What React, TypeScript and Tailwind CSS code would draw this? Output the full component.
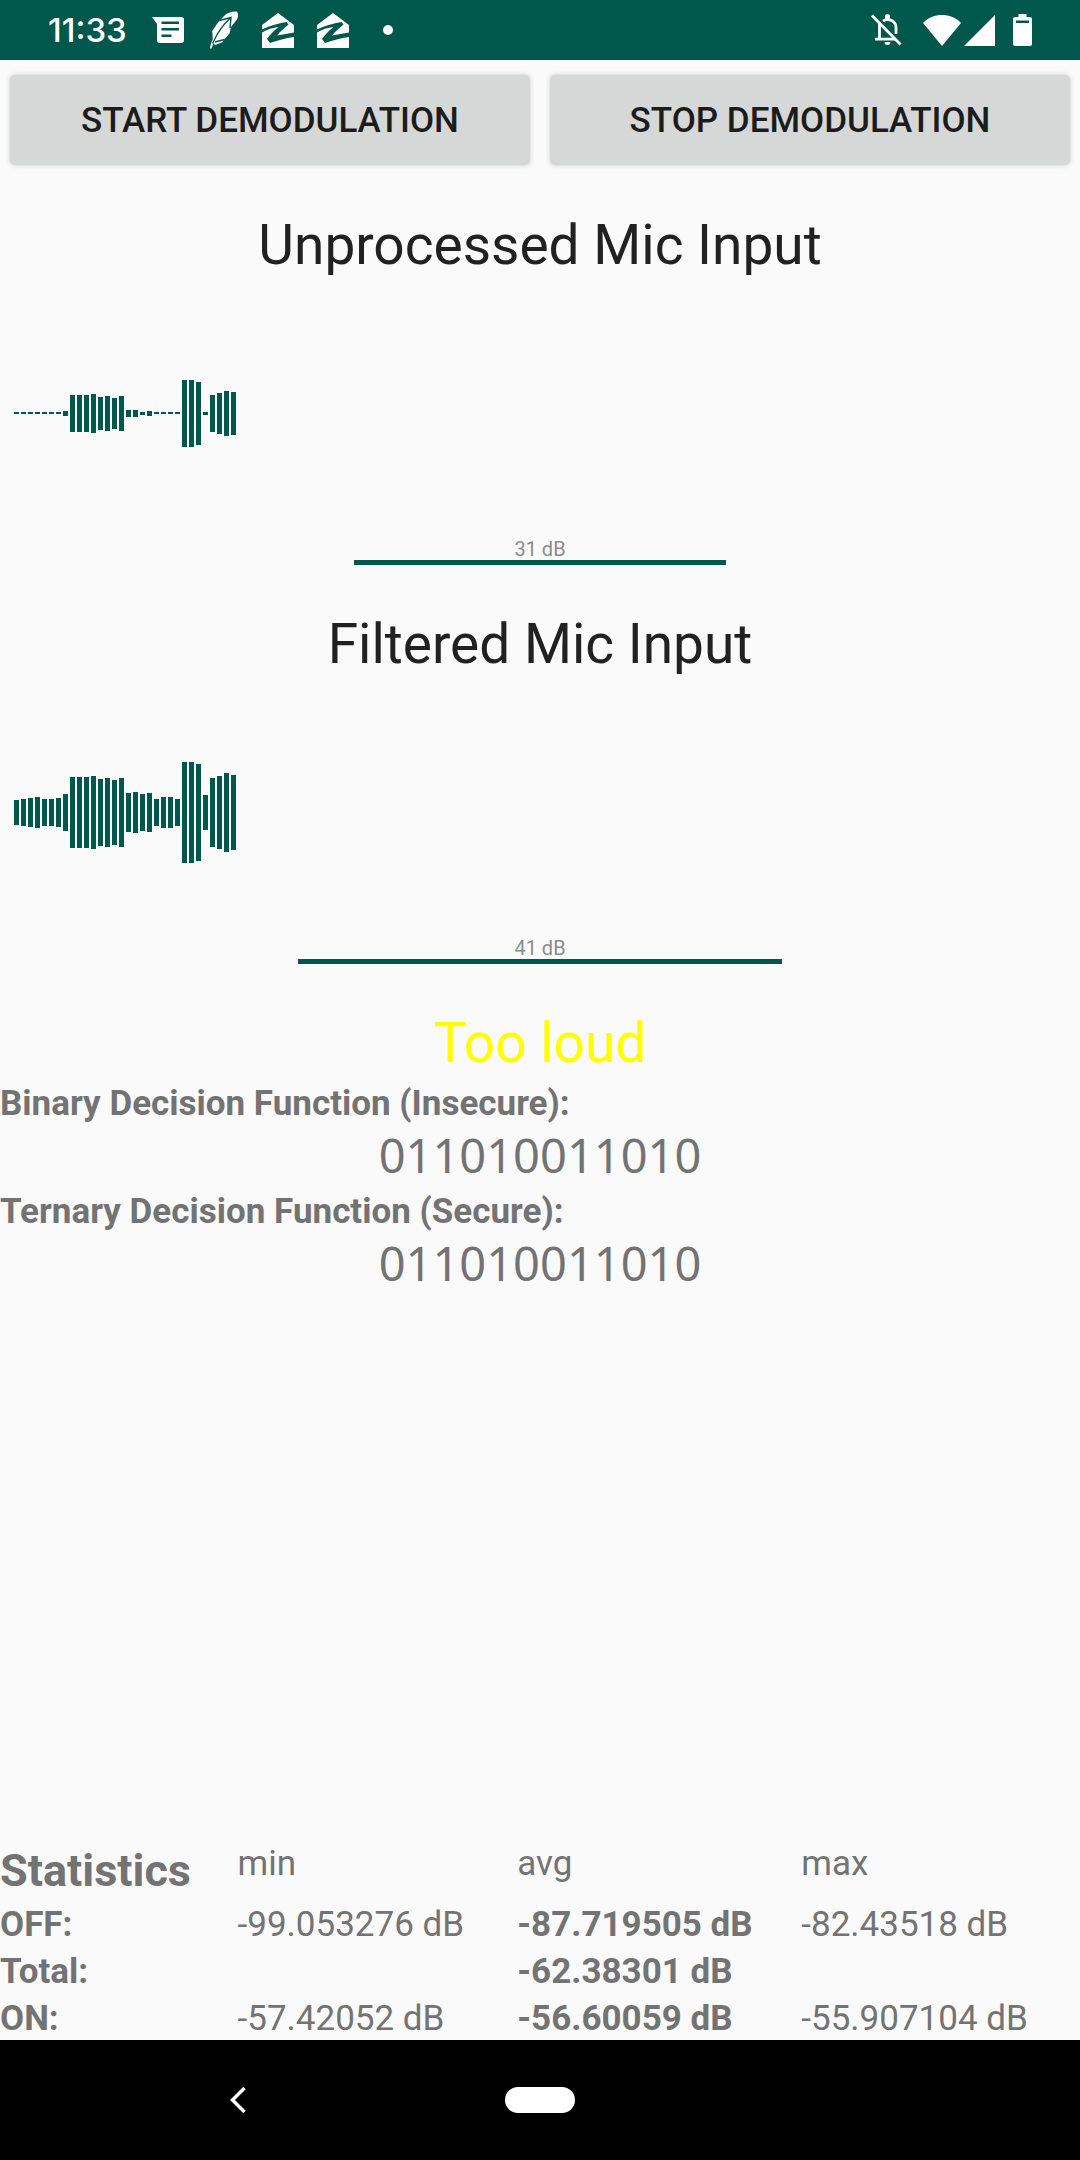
import type { ReactNode } from "react";

const RAW_BARS = [
  2, 2, 2, 2, 2, 2, 2, 5, 37, 37, 37, 39, 33, 35, 31, 35, 7, 7, 3, 5, 2, 2, 2,
  2, 67, 67, 63, 3, 37, 41, 45, 43,
];
const FILTERED_BARS = [
  25, 27, 29, 31, 27, 27, 29, 37, 71, 71, 71, 73, 67, 69, 65, 69, 39, 41, 37,
  39, 27, 31, 31, 27, 101, 101, 97, 35, 69, 73, 79, 75,
];

const STATS = [
  { name: "OFF:", min: "-99.053276 dB", avg: "-87.719505 dB", max: "-82.43518 dB" },
  { name: "Total:", min: "", avg: "-62.38301 dB", max: "" },
  { name: "ON:", min: "-57.42052 dB", avg: "-56.60059 dB", max: "-55.907104 dB" },
];

function Waveform({ bars, label }: { bars: number[]; label: string }) {
  return (
    <svg
      role="img"
      aria-label={label}
      width={bars.length * 7}
      height="101"
      shapeRendering="crispEdges"
      className="block fill-[#00574b]"
    >
      {bars.map((h, i) => (
        <rect key={i} x={i * 7} y={Math.floor((101 - h) / 2)} width="5" height={h} />
      ))}
    </svg>
  );
}

function MicPanel({
  title,
  bars,
  level,
  meter,
}: {
  title: string;
  bars: number[];
  level: string;
  meter: string;
}) {
  return (
    <section className="flex h-[399px] flex-col">
      <h2 className="text-center text-[55px] leading-[73px] text-[#212121]">{title}</h2>
      <div className="mt-[81px] px-[14px]">
        <Waveform bars={bars} label={title + " waveform"} />
      </div>
      <div className="mt-[75px] flex flex-col items-center">
        <span className="text-[20px] leading-[21px] text-[#8c8c8c]">{level}</span>
        <div className="h-[5px] bg-[#00574b]" style={{ width: meter }} />
      </div>
    </section>
  );
}

function DemodButton({ children }: { children: ReactNode }) {
  return (
    <button
      type="button"
      className="h-[90px] flex-1 rounded-[5px] bg-[#d6d7d7] pt-[2px] text-[35px] font-medium text-[#1c1c1c] uppercase shadow-[0_0_5px_rgba(0,0,0,0.2)]"
    >
      {children}
    </button>
  );
}

function DecisionOutput({ title, bits }: { title: string; bits: string }) {
  return (
    <section>
      <h3 className="text-[35px] leading-[47px] font-bold">{title}</h3>
      <p className="pb-1 text-center font-['Noto_Sans',sans-serif] text-[47px] leading-[57px]">
        {bits}
      </p>
    </section>
  );
}

function MessageIcon() {
  return (
    <svg width="32" height="26" viewBox="0 0 32 26" aria-hidden="true">
      <path
        fill="#fff"
        fillRule="evenodd"
        d="M0 0h29a3 3 0 0 1 3 3v20a3 3 0 0 1-3 3H8a3 3 0 0 1-3-3V7zM9.500 4.500v2.500h17.500V4.500zM9.500 11v2.500h17.500V11zM9.500 17.500v2.500h10v-2.500z"
      />
    </svg>
  );
}

function FeatherIcon() {
  return (
    <svg width="29" height="38" viewBox="0 0 29 38" aria-hidden="true">
      <path
        fill="#fff"
        d="M0 37.500C.5 34 1.500 31 2.800 28L2.200 20 8 11.500 14 5C17 2 22 .2 27 .7 28.600 3 28.200 6 27 8.500L21 16 19.500 22.500 14.500 28 12 31.500 5 34 3.500 32 1.500 37.500z"
      />
      <path
        fill="none"
        stroke="#00574b"
        strokeWidth="1.400"
        d="M2.500 32.500C7 22.500 13 13.500 20.500 7M9.500 9.500 21 6.500 20 17M5 31l9.500-2.500"
      />
    </svg>
  );
}

function HouseIcon() {
  return (
    <svg width="32" height="35" viewBox="0 0 32 35" aria-hidden="true">
      <path
        fill="#fff"
        d="M16 0 32 12v7.500L15 22.500C18 18.500 23 14.500 26.500 11.500L24.500 9C16 10.500 7 13 0 16.500V12z"
      />
      <path
        fill="#fff"
        d="M0 19.500C5 16.500 11 14.500 16.500 14 12 17.500 8 21.500 5 26l3 4C15 27.500 24 25 32 24V35H0z"
      />
    </svg>
  );
}

function BellOffIcon() {
  return (
    <svg width="31" height="32" viewBox="0 0 31 32" fill="none" stroke="#fff" aria-hidden="true">
      <path strokeWidth="2.800" d="M1 1.500 29.500 30.500" />
      <path strokeWidth="2.800" d="M8.500 10v15.500M4 25.200h20M12 7C18 3.500 25 7 25 14v6" />
      <path fill="#fff" stroke="none" d="M14 5V2.500a2.500 2.500 0 0 1 5 0V5zM13.500 28h6a3 3 0 0 1-6 0z" />
    </svg>
  );
}

function StatusBar() {
  return (
    <header className="flex h-[60px] items-center bg-[#00574b] px-[48px] text-white">
      <time className="mr-[29px] w-[75px] font-['Inter',sans-serif] text-[33px] leading-[60px] font-medium whitespace-nowrap">
        11:33
      </time>
      <MessageIcon />
      <span className="ml-[26px]">
        <FeatherIcon />
      </span>
      <span className="ml-[23px]">
        <HouseIcon />
      </span>
      <span className="ml-[23px]">
        <HouseIcon />
      </span>
      <span className="ml-[34px] size-[10px] rounded-full bg-white" />
      <div className="ml-auto flex items-center">
        <BellOffIcon />
        <svg className="ml-[21px]" width="38" height="31" viewBox="0 0 38 31" aria-hidden="true">
          <path fill="#fff" d="M0 8C10-2.600 28-2.600 38 8L19 31z" />
        </svg>
        <svg className="ml-[3px]" width="31" height="31" viewBox="0 0 31 31" aria-hidden="true">
          <path fill="#fff" d="M31 0v31H0z" />
        </svg>
        <svg className="ml-[18px]" width="19" height="32" viewBox="0 0 19 32" aria-hidden="true">
          <path
            fill="#fff"
            fillRule="evenodd"
            d="M5.500 0h8v3H17a2 2 0 0 1 2 2v25a2 2 0 0 1-2 2H2a2 2 0 0 1-2-2V5a2 2 0 0 1 2-2h3.500zM3 6.500V9h13V6.500z"
          />
        </svg>
      </div>
    </header>
  );
}

export default function App() {
  return (
    <div className="flex min-h-screen flex-col bg-[#fafafa] font-['Roboto',sans-serif]">
      <StatusBar />
      <main className="flex flex-1 flex-col text-[#737373]">
        <div className="flex gap-[20px] px-[10px] pt-[15px] pb-[44px]">
          <DemodButton>Start Demodulation</DemodButton>
          <DemodButton>Stop Demodulation</DemodButton>
        </div>
        <MicPanel title="Unprocessed Mic Input" bars={RAW_BARS} level="31 dB" meter="34.4%" />
        <MicPanel title="Filtered Mic Input" bars={FILTERED_BARS} level="41 dB" meter="44.8%" />
        <p className="text-center text-[55px] leading-[73px] text-[#ffff00]">Too loud</p>
        <DecisionOutput title="Binary Decision Function (Insecure):" bits="011010011010" />
        <DecisionOutput title="Ternary Decision Function (Secure):" bits="011010011010" />
        <table className="mt-auto w-full table-fixed border-collapse text-left text-[35px] leading-[43px]">
          <colgroup>
            <col className="w-[22%]" />
            <col className="w-[25.9%]" />
            <col className="w-[26.3%]" />
            <col />
          </colgroup>
          <thead>
            <tr className="align-top">
              <th className="pt-1 text-[45px] leading-[57px] font-bold">Statistics</th>
              <th className="pt-1 font-normal">min</th>
              <th className="pt-1 font-normal">avg</th>
              <th className="pt-1 font-normal">max</th>
            </tr>
          </thead>
          <tbody>
            {STATS.map((row) => (
              <tr key={row.name}>
                <th className="pt-1 font-bold">{row.name}</th>
                <td className="pt-1">{row.min}</td>
                <td className="pt-1 font-bold">{row.avg}</td>
                <td className="pt-1">{row.max}</td>
              </tr>
            ))}
          </tbody>
        </table>
      </main>
      <nav className="grid h-[120px] grid-cols-[44%_12%_44%] items-center bg-black">
        <button type="button" aria-label="Back" className="justify-self-center">
          <svg width="16" height="26" viewBox="0 0 16 26" aria-hidden="true">
            <path fill="none" stroke="#fff" strokeWidth="3.500" d="M14.500 1 2.500 13l12 12" />
          </svg>
        </button>
        <button
          type="button"
          aria-label="Home"
          className="h-[26px] w-[70px] justify-self-center rounded-full bg-white"
        />
      </nav>
    </div>
  );
}
